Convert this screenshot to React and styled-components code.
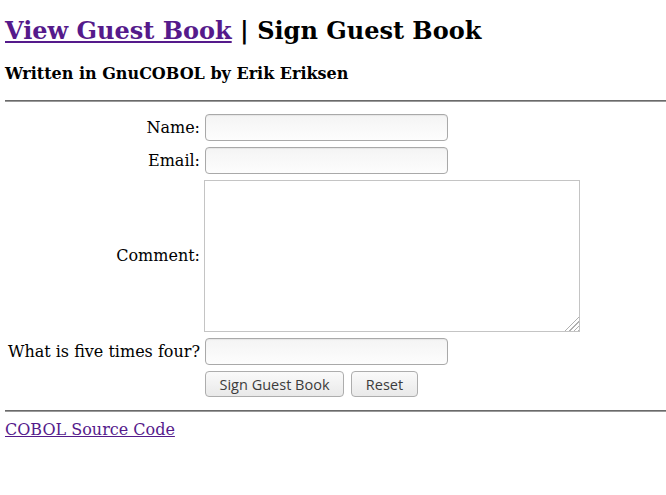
import React from "react";
import styled, { createGlobalStyle } from "styled-components";

const Global = createGlobalStyle`
  html, body { margin: 0; padding: 0; background: #fff; }
  body { font-family: "DejaVu Serif", serif; font-size: 16px; color: #000; }
`;

const Page = styled.div`
  padding: 17px 0 0 5px;
`;

const Title = styled.h2`
  margin: 0;
  font-size: 24px;
  line-height: 28px;
  font-weight: bold;
`;

const Link = styled.a`
  color: #551a8b;
  text-decoration: underline;
`;

const Subtitle = styled.h4`
  margin: 19px 0 0;
  font-size: 16px;
  line-height: 20px;
  font-weight: bold;
`;

const Rule = styled.hr`
  margin: ${(p) => p.$top}px 0 0;
  height: 0;
  border: none;
  border-top: 1px solid #6a6a6a;
  border-bottom: 1px solid #9a9a9a;
`;

const Form = styled.form`
  margin-top: 12px;
  display: grid;
  grid-template-columns: 192px auto;
  column-gap: 4px;
  row-gap: 6px;
  padding-left: 3px;
  justify-items: start;
`;

const Label = styled.label`
  justify-self: end;
  align-self: center;
  font-size: 16px;
  line-height: 20px;
  white-space: nowrap;
`;

const TextInput = styled.input`
  box-sizing: border-box;
  width: 243px;
  height: 27px;
  margin: 0 0 0 1px;
  border: 1px solid #a9a9a9;
  border-radius: 4px;
  background: linear-gradient(#f4f4f4, #fdfdfd);
  box-shadow: inset 0 1px 1px rgba(0, 0, 0, 0.06);
  font: 13px "DejaVu Sans", sans-serif;
`;

const TextArea = styled.textarea`
  box-sizing: border-box;
  width: 376px;
  height: 152px;
  margin: 0;
  border: 1px solid #c4c4c4;
  background: #fff;
  font: 13px "DejaVu Sans Mono", monospace;
  resize: both;

  &::-webkit-resizer {
    background:
      linear-gradient(to bottom right, #fff 50%, transparent 50%),
      repeating-linear-gradient(135deg, transparent 0 2px, #b0b0b0 2px 3px);
  }
`;

const Buttons = styled.div`
  grid-column: 2;
  display: flex;
  gap: 7px;
  margin-left: 1px;
`;

const Button = styled.button`
  box-sizing: border-box;
  height: 26px;
  width: ${(p) => p.$w}px;
  padding: 0;
  border: 1px solid #adadad;
  border-radius: 4px;
  background: linear-gradient(#fafafa, #e9e9e9);
  color: #3c3c3c;
  font: 14.5px "Open Sans", "DejaVu Sans", sans-serif;
  cursor: pointer;
`;

const Footer = styled.div`
  margin-top: 8px;
  font-size: 16px;
  line-height: 20px;
`;

export default function App() {
  return (
    <>
      <Global />
      <Page>
        <Title>
          <Link href="#">View Guest Book</Link> | Sign Guest Book
        </Title>
        <Subtitle>Written in GnuCOBOL by Erik Eriksen</Subtitle>
        <Rule $top={16} />
        <Form onSubmit={(e) => e.preventDefault()}>
          <Label htmlFor="name">Name:</Label>
          <TextInput id="name" type="text" />
          <Label htmlFor="email">Email:</Label>
          <TextInput id="email" type="text" />
          <Label htmlFor="comment">Comment:</Label>
          <TextArea id="comment" />
          <Label htmlFor="answer">What is five times four?</Label>
          <TextInput id="answer" type="text" />
          <Buttons>
            <Button type="submit" $w={139}>Sign Guest Book</Button>
            <Button type="reset" $w={67}>Reset</Button>
          </Buttons>
        </Form>
        <Rule $top={13} />
        <Footer>
          <Link href="#">COBOL Source Code</Link>
        </Footer>
      </Page>
    </>
  );
}
